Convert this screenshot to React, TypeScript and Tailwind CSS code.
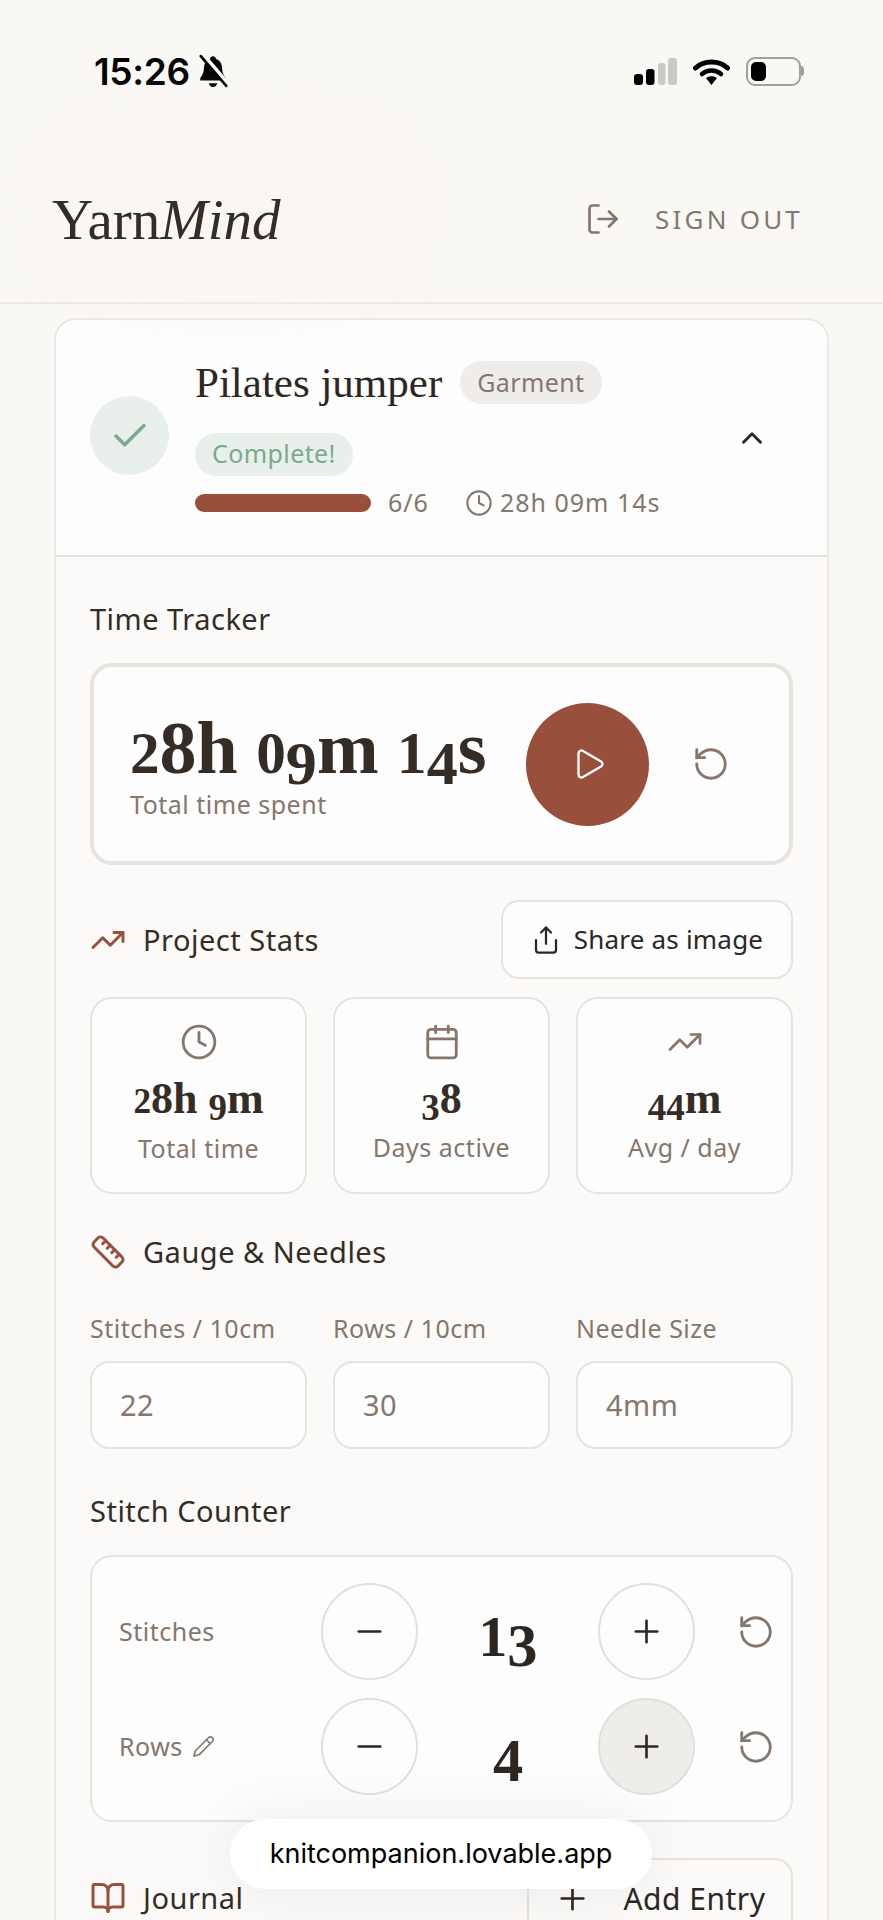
import React from 'react';
import { BookOpen, Calendar, Check, ChevronUp, Clock, LogOut, Minus, Pencil, Play, Plus, RotateCcw, Ruler, Share, TrendingUp } from 'lucide-react';

const serif = "font-['Liberation_Serif',serif]";
const sans = "font-['Noto_Sans','Lato',sans-serif]";

// Old-style figures: the installed serif only has lining ones, so size and drop them per digit
const OldStyle = ({ text }: { text: string }) => (
  <>
    {text.split('').map((c, i) => {
      if ('012'.includes(c)) return <span key={i} className="text-[0.8em]">{c}</span>;
      if ('3459'.includes(c)) return <span key={i} className="relative top-[0.18em] text-[0.84em]">{c}</span>;
      return <span key={i}>{c}</span>;
    })}
  </>
);

const StatusBar = () => (
  <div className="flex items-center justify-between h-[140px] pl-[94px] pr-[79px] pt-[2px]">
    <div className="flex items-center gap-[6px] text-black">
      <span className="font-['Inter',sans-serif] font-semibold text-[37px] leading-none tracking-[-0.3px]">15:26</span>
      <svg width="34" height="34" viewBox="0 0 30 32" fill="currentColor">
        <path d="M15 2c1.600 0 2.500 1 2.800 2.600 3.600 1.200 5.600 4.400 5.700 8.400.1 3.600.9 6.400 3.500 9.500v2.500H3v-2.500c2.600-3.100 3.400-5.900 3.500-9.500.1-4 2.100-7.200 5.700-8.400C12.500 3 13.400 2 15 2zM11 27.500h8c-.4 2-2 3.500-4 3.500s-3.600-1.500-4-3.500z" />
        <path d="M5 0l24 28" stroke="#faf8f5" strokeWidth="4" />
        <path d="M3.500 2l24 28" stroke="currentColor" strokeWidth="2.500" strokeLinecap="round" />
      </svg>
    </div>
    <div className="flex items-center gap-[16px]">
      <svg width="43" height="27" viewBox="0 0 43 27">
        <rect x="0" y="16" width="9" height="11" rx="3" fill="#000" />
        <rect x="12" y="11" width="8.500" height="16" rx="3" fill="#000" />
        <rect x="24" y="5" width="7.500" height="22" rx="3" fill="#c9c9c8" />
        <rect x="34" y="0" width="9" height="27" rx="3" fill="#c9c9c8" />
      </svg>
      <svg width="37" height="27" viewBox="0 0 37 27">
        <path d="M2.500 10C11 2 26 2 34.500 10" fill="none" stroke="#000" strokeWidth="5" strokeLinecap="round" />
        <path d="M9 16c5.500-4.600 13.500-4.600 19 0" fill="none" stroke="#000" strokeWidth="4.500" strokeLinecap="round" />
        <path d="M13 20c3.300-2.200 7.700-2.200 11 0l-5.500 7z" fill="#000" />
      </svg>
      <div className="flex items-center">
        <div className="w-[55px] h-[29px] rounded-[9px] border-2 border-[#a3a19e] p-[3px] flex">
          <div className="w-[15px] h-full bg-black rounded-[5px]" />
        </div>
        <div className="w-[3px] h-[10px] rounded-r-full bg-[#a3a19e]" />
      </div>
    </div>
  </div>
);

const Header = () => (
  <header className="relative flex items-center justify-between h-[164px] border-b-2 border-[#ebe8e3] pl-[52px] pr-[80px] pb-[4px]">
    <div className="absolute left-[60px] top-[5px] w-[340px] h-[130px] rounded-full bg-[#f9f5f2] blur-2xl" />
    <div className={`${serif} relative text-[57px] leading-none text-[#352c26]`}>
      Yarn<span className="italic">Mind</span>
    </div>
    <div className="relative flex items-center gap-[34px] text-[#86766c]">
      <LogOut size={36} strokeWidth={1.800} className="text-[#86766c]" />
      <span className={`${sans} text-[26px] tracking-[3.200px]`}>SIGN OUT</span>
    </div>
  </header>
);

const Tag = ({ className, children }: { className: string; children: React.ReactNode }) => (
  <span className={`${sans} inline-flex items-center h-[43px] px-[17px] rounded-full text-[25px] tracking-[0.4px] ${className}`}>{children}</span>
);

const ProjectHead = () => (
  <div className="flex items-center h-[237px] pl-[34px] pr-[58px] border-b-2 border-[#e6e3de] bg-[#fdfdfd]">
    <div className="w-[79px] h-[79px] rounded-full bg-[#e9efeb] flex items-center justify-center mr-[26px] mt-[-4px]">
      <Check size={42} strokeWidth={2} className="text-[#79ab8e]" />
    </div>
    <div className="flex-1 flex flex-col mt-[6px]">
      <div className="flex items-center gap-[18px]">
        <span className={`${serif} text-[43px] leading-[52px] text-[#2d2723]`}>Pilates jumper</span>
        <Tag className="bg-[#efedea] text-[#86766c]">Garment</Tag>
      </div>
      <div className="mt-[24px]">
        <Tag className="bg-[#e9efeb] text-[#79ab8e]">Complete!</Tag>
      </div>
      <div className={`${sans} flex items-center mt-[5px] text-[25px] tracking-[1px] text-[#86766c] h-[44px]`}>
        <div className="w-[176px] h-[18px] rounded-full bg-[#98503d]" />
        <span className="ml-[17px]">6/6</span>
        <Clock size={28} strokeWidth={1.800} className="ml-[36px] mr-[7px]" />
        <span>28h 09m 14s</span>
      </div>
    </div>
    <ChevronUp size={34} strokeWidth={2} className="text-[#2d2723]" />
  </div>
);

const TimeTracker = () => (
  <div className="flex items-center h-[202px] rounded-[22px] border-[4px] border-[#e7e3de] bg-[#fdfdfd] pl-[36px]">
    <div className="w-[396px] pt-[9px]">
      <div className={`${serif} font-bold text-[74px] leading-[60px] text-[#352c26] whitespace-nowrap`}><OldStyle text="28h 09m 14s" /></div>
      <div className={`${sans} text-[25px] tracking-[0.5px] leading-[32px] text-[#86766c] mt-[5px]`}>Total time spent</div>
    </div>
    <div className="w-[123px] h-[123px] rounded-full bg-[#98503d] flex items-center justify-center">
      <Play size={36} strokeWidth={1.500} className="text-white ml-[3px]" />
    </div>
    <RotateCcw size={38} strokeWidth={1.800} className="ml-[43px] text-[#86766c]" />
  </div>
);

const SectionTitle = ({ icon, children }: { icon: React.ReactNode; children: React.ReactNode }) => (
  <div className="flex items-center gap-[17px]">
    {icon}
    <span className={`${sans} text-[29px] tracking-[0.5px] leading-[36px] text-[#352c26]`}>{children}</span>
  </div>
);

const stats = [
  { icon: <Clock size={38} strokeWidth={1.800} />, value: '28h 9m', label: 'Total time' },
  { icon: <Calendar size={38} strokeWidth={1.800} />, value: '38', label: 'Days active' },
  { icon: <TrendingUp size={36} strokeWidth={1.800} />, value: '44m', label: 'Avg / day' },
];

const Stats = () => (
  <div className="grid grid-cols-3 gap-[26px] mt-[18px]">
    {stats.map((s) => (
      <div key={s.label} className="h-[197px] rounded-[22px] border-2 border-[#e7e3de] bg-[#fdfdfd] flex flex-col items-center pt-[24px] text-[#86766c]">
        <div className="h-[38px] flex items-center">{s.icon}</div>
        <div className={`${serif} font-bold text-[44px] leading-[48px] text-[#352c26] mt-[14px]`}><OldStyle text={s.value} /></div>
        <div className={`${sans} text-[25px] tracking-[0.5px] leading-[32px] mt-[6px]`}>{s.label}</div>
      </div>
    ))}
  </div>
);

const gauge = [
  { label: 'Stitches / 10cm', value: '22' },
  { label: 'Rows / 10cm', value: '30' },
  { label: 'Needle Size', value: '4mm' },
];

const Gauge = () => (
  <div className="grid grid-cols-3 gap-[26px] mt-[42px]">
    {gauge.map((g) => (
      <div key={g.label}>
        <div className={`${sans} text-[25px] tracking-[0.5px] leading-[32px] text-[#86766c] whitespace-nowrap`}>{g.label}</div>
        <div className={`${sans} mt-[17px] h-[88px] rounded-[20px] border-2 border-[#e7e3de] bg-[#fdfdfd] flex items-center pl-[28px] text-[29px] tracking-[0.5px] text-[#86766c]`}>
          {g.value}
        </div>
      </div>
    ))}
  </div>
);

const CircleBtn = ({ active, children }: { active?: boolean; children: React.ReactNode }) => (
  <div className={`w-[97px] h-[97px] rounded-full border-2 border-[#e3dfda] flex items-center justify-center text-[#2d2723] ${active ? 'bg-[#efedea]' : 'bg-[#fdfdfd]'}`}>
    {children}
  </div>
);

const CounterRow = ({ label, value, pencil, active }: { label: string; value: string; pencil?: boolean; active?: boolean }) => (
  <div className="flex items-center h-[97px]">
    <div className={`${sans} w-[202px] flex items-center gap-[9px] text-[25px] tracking-[0.5px] text-[#86766c]`}>
      {label}
      {pencil && <Pencil size={23} strokeWidth={1.700} />}
    </div>
    <CircleBtn><Minus size={37} strokeWidth={1.700} /></CircleBtn>
    <div className={`${serif} font-bold w-[180px] text-center text-[72px] leading-none text-[#2d2723]`}><OldStyle text={value} /></div>
    <CircleBtn active={active}><Plus size={37} strokeWidth={1.700} /></CircleBtn>
    <RotateCcw size={38} strokeWidth={1.800} className="ml-[42px] text-[#86766c]" />
  </div>
);

export default function App() {
  return (
    <div className="relative h-[1920px] overflow-hidden bg-[#faf8f5]">
      <StatusBar />
      <Header />
      <main className="mx-[54px] mt-[14px] rounded-t-[22px] border-x-2 border-t-2 border-[#ebe8e3] bg-[#fbfaf8] overflow-hidden">
        <ProjectHead />
        <div className="px-[34px] pt-[44px]">
          <div className={`${sans} text-[29px] tracking-[0.5px] leading-[36px] text-[#352c26] mb-[26px]`}>Time Tracker</div>
          <TimeTracker />
          <div className="flex items-center justify-between mt-[35px]">
            <SectionTitle icon={<TrendingUp size={36} strokeWidth={2} className="text-[#98503d]" />}>Project Stats</SectionTitle>
            <div className={`${sans} w-[292px] h-[79px] rounded-[18px] border-2 border-[#e7e3de] bg-[#fdfdfd] flex items-center justify-center gap-[13px] text-[26px] tracking-[0.2px] text-[#2d2723]`}>
              <Share size={30} strokeWidth={1.800} />
              Share as image
            </div>
          </div>
          <Stats />
          <div className="mt-[40px]">
            <SectionTitle icon={<Ruler size={36} strokeWidth={2} className="text-[#98503d]" />}>Gauge &amp; Needles</SectionTitle>
          </div>
          <Gauge />
          <div className={`${sans} text-[29px] tracking-[0.5px] leading-[36px] text-[#352c26] mt-[44px]`}>Stitch Counter</div>
          <div className="mt-[26px] h-[267px] rounded-[22px] border-2 border-[#e7e3de] bg-[#fdfdfd] pl-[27px] pt-[26px] flex flex-col gap-[18px]">
            <CounterRow label="Stitches" value="13" />
            <CounterRow label="Rows" value="4" pencil active />
          </div>
          <div className="flex items-center justify-between mt-[36px] h-[80px]">
            <SectionTitle icon={<BookOpen size={36} strokeWidth={2} className="text-[#98503d]" />}>Journal</SectionTitle>
            <div className={`${sans} w-[266px] h-[80px] rounded-[18px] border-2 border-[#e7e3de] flex items-center justify-center gap-[32px] text-[30px] tracking-[0.5px] text-[#2d2723]`}>
              <Plus size={37} strokeWidth={1.700} />
              Add Entry
            </div>
          </div>
        </div>
      </main>
      <div className="absolute left-[230px] top-[1819px] w-[422px] h-[70px] rounded-full bg-white flex items-center justify-center font-['Inter',sans-serif] text-[27px] text-black shadow-[0_0_60px_rgba(0,0,0,0.07)]">
        knitcompanion.lovable.app
      </div>
    </div>
  );
}
